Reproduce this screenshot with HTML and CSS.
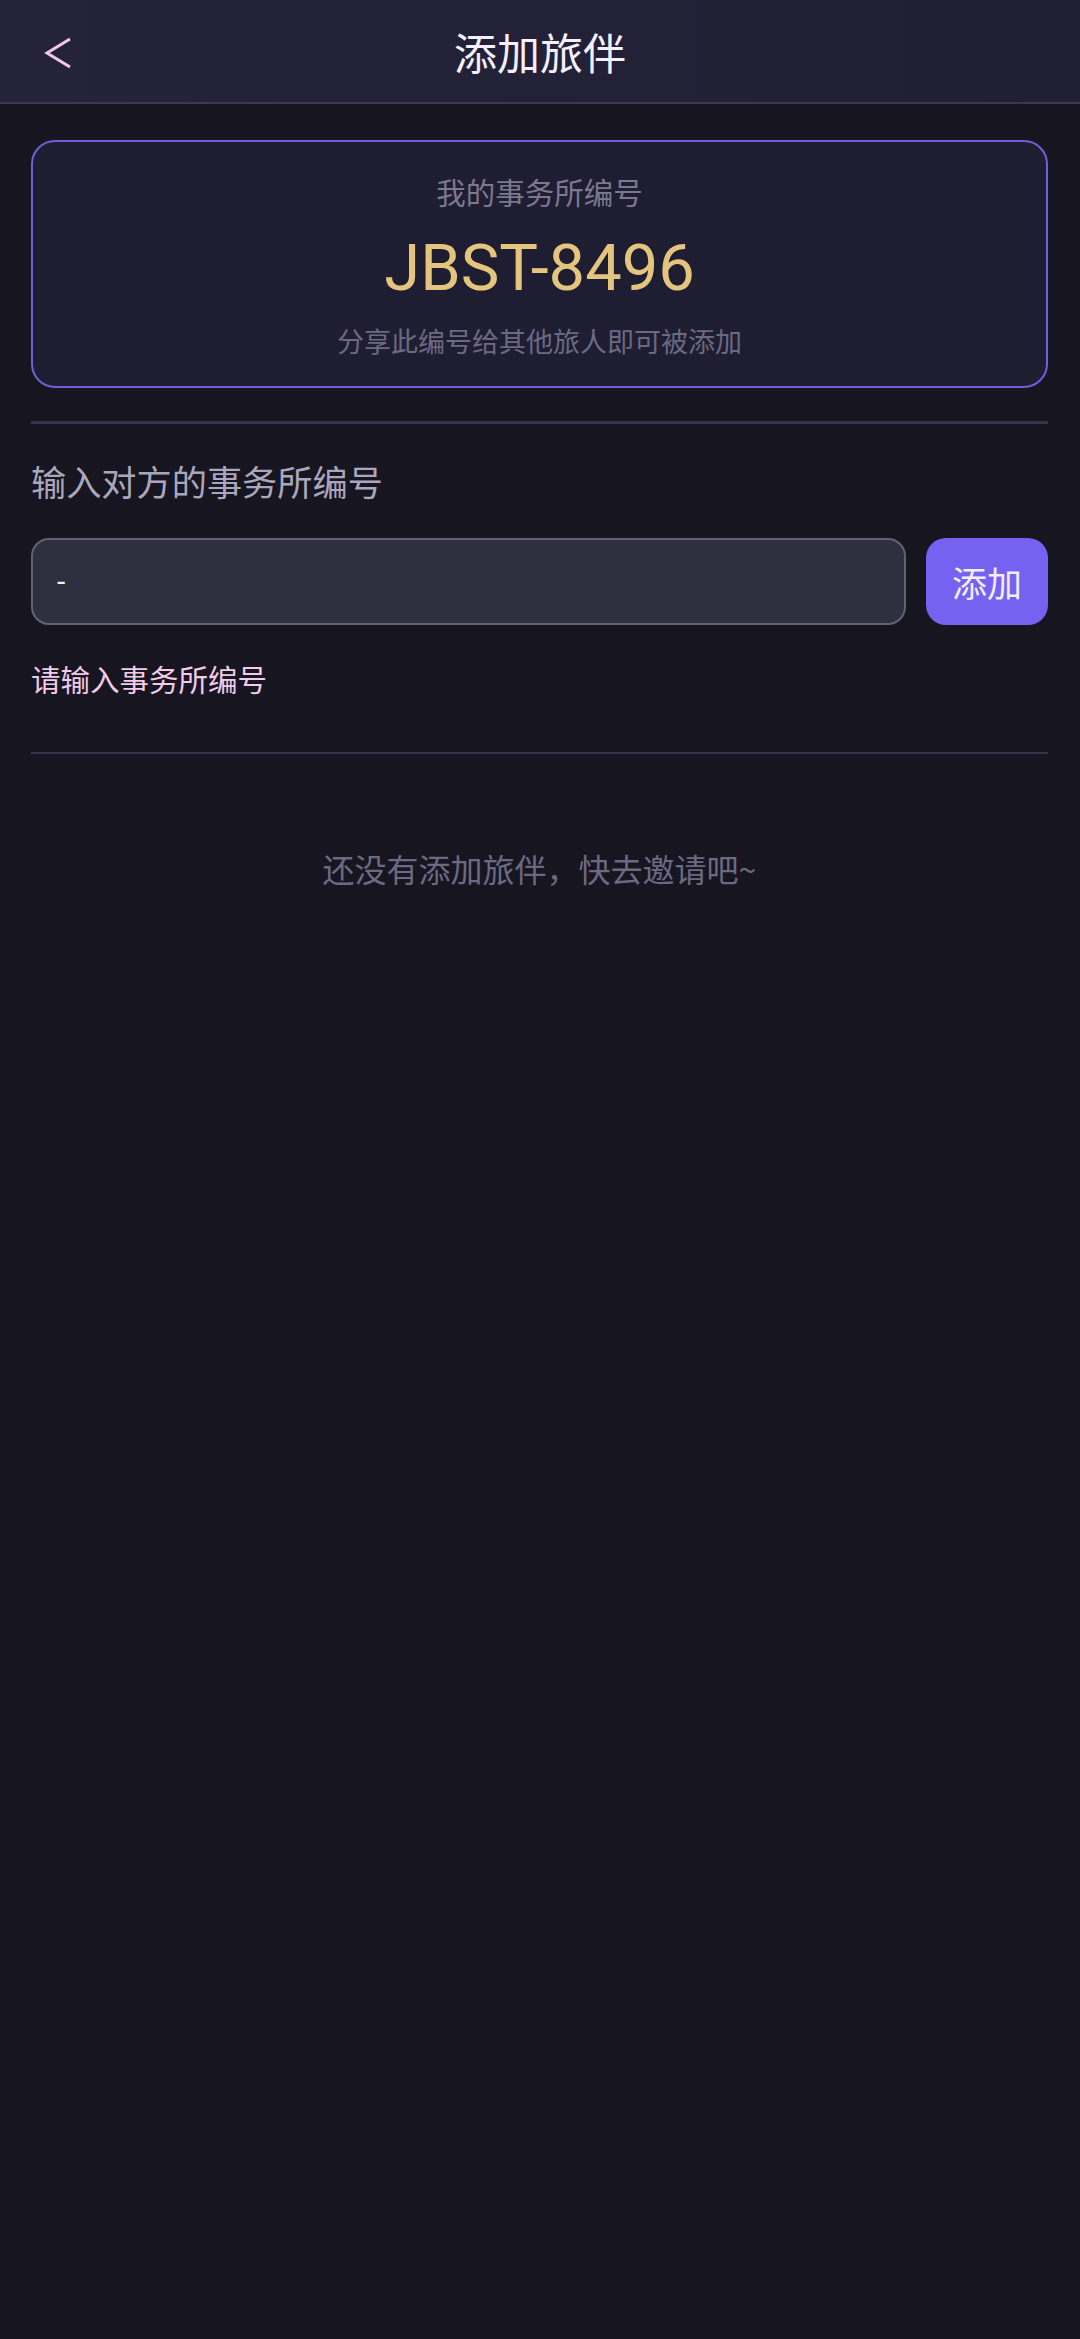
FILE: index.html
```html
<!DOCTYPE html>
<html lang="zh-CN">

<head>
    <meta charset="UTF-8">
    <meta name="viewport" content="width=device-width, initial-scale=1.0">
    <title>添加旅伴</title>
    <link rel="stylesheet" href="styles.css">
</head>

<body>

    <!-- Top bar -->
    <header class="topbar">
        <button class="back-btn" aria-label="返回">
            <svg width="28" height="32" viewBox="0 0 28 32">
                <polyline points="26,2 3,16 26,30" fill="none" stroke="#f3c6e9" stroke-width="3" stroke-linejoin="miter" />
            </svg>
        </button>
        <h1 class="title">添加旅伴</h1>
    </header>

    <main class="content">
        <!-- My code card -->
        <section class="code-card">
            <p class="code-label">我的事务所编号</p>
            <p class="code-value">JBST-8496</p>
            <p class="code-tip">分享此编号给其他旅人即可被添加</p>
        </section>

        <hr class="divider">

        <!-- Add form -->
        <p class="section-label">输入对方的事务所编号</p>
        <div class="add-row">
            <input type="text" class="code-input" value="-" />
            <button class="add-btn">添加</button>
        </div>
        <p class="hint">请输入事务所编号</p>

        <hr class="divider divider-list">

        <!-- Companion list -->
        <p class="empty">还没有添加旅伴，快去邀请吧~</p>
    </main>

</body>

</html>
```

FILE: styles.css
```css
/* Global styles */
* {
    margin: 0;
    padding: 0;
    box-sizing: border-box;
}

body {
    font-family: 'Noto Sans CJK SC', 'Noto Sans', sans-serif;
    background-color: #17151f;
    min-height: 100vh;
}

/* Top bar */
.topbar {
    position: relative;
    height: 104px;
    display: flex;
    justify-content: center;
    align-items: center;
    background: linear-gradient(to right, #24233a, #201f33);
    border-bottom: 2px solid #3a394d;
}

.back-btn {
    position: absolute;
    left: 44px;
    top: 37px;
    background: none;
    border: none;
    width: 28px;
    height: 32px;
}

.title {
    font-size: 43px;
    font-weight: 400;
    color: #f5efff;
    line-height: 1;
}

/* Content */
.content {
    padding: 0 32px 0 31px;
}

/* My code card */
.code-card {
    margin-top: 36px;
    padding: 29px 0 27px;
    border: 2px solid #6f5fd9;
    border-radius: 24px;
    background-color: #1f1d32;
    text-align: center;
}

.code-label {
    font-size: 29.5px;
    line-height: 40px;
    color: #7b7890;
}

.code-value {
    margin-top: 19px;
    font-family: 'Roboto', sans-serif;
    font-size: 65px;
    line-height: 76px;
    color: #e4c57e;
}

.code-tip {
    margin-top: 17px;
    font-size: 27px;
    line-height: 36px;
    color: #6c6983;
}

/* Dividers */
.divider {
    margin-top: 33px;
    border: none;
    height: 3px;
    background-color: #35344a;
}

.divider-list {
    margin-top: 54px;
    height: 2px;
}

/* Add form */
.section-label {
    margin-top: 35px;
    font-size: 35.2px;
    line-height: 44px;
    color: #aaa6bd;
}

.add-row {
    margin-top: 35px;
    display: flex;
    gap: 20px;
}

.code-input {
    flex: 1;
    height: 87px;
    padding: 0 24px;
    background-color: #2f303f;
    border: 2px solid #626271;
    border-radius: 18px;
    outline: none;
    font-family: 'Roboto', sans-serif;
    font-size: 30px;
    color: #f2f2f6;
}

.add-btn {
    width: 122px;
    height: 87px;
    background-color: #7562f0;
    color: #f3eeff;
    border: none;
    border-radius: 20px;
    font-family: 'Noto Sans CJK SC', sans-serif;
    font-size: 35px;
}

.hint {
    margin-top: 33px;
    font-size: 29.5px;
    line-height: 40px;
    color: #f1cbe7;
}

/* Empty list */
.empty {
    margin-top: 92px;
    font-size: 32px;
    line-height: 44px;
    color: #6c6983;
    text-align: center;
}
```
